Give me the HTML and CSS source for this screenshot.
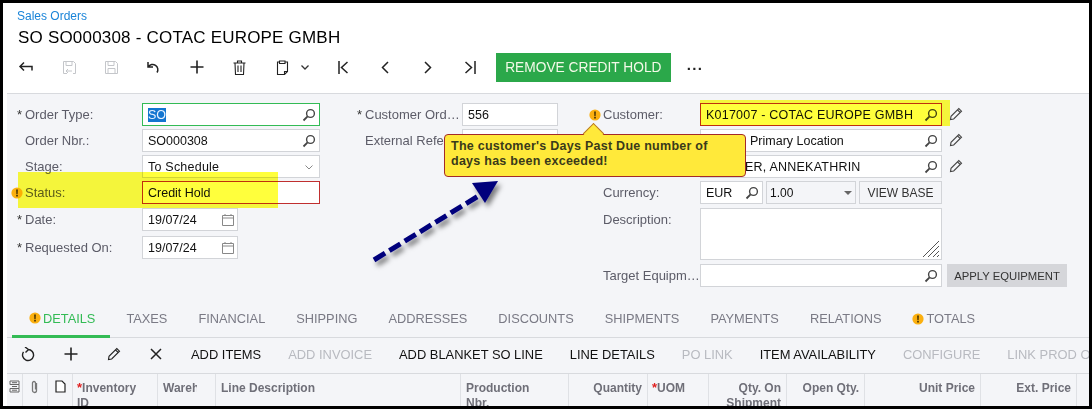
FILE: index.html
```html
<!DOCTYPE html>
<html lang="en">
<head>
    <meta charset="UTF-8">
    <meta name="viewport" content="width=device-width, initial-scale=1.0">
    <title>Sales Orders</title>
    <link rel="stylesheet" href="styles.css">
</head>
<body>
    <svg class="defs" width="0" height="0">
        <symbol id="i-search" viewBox="0 0 14 14"><circle cx="8.5" cy="5.5" r="3.9" fill="none" stroke="currentColor" stroke-width="1.4"/><path d="M5.6 8.4 1.5 12.5" stroke="currentColor" stroke-width="1.8" fill="none"/></symbol>
        <symbol id="i-cal" viewBox="0 0 14 14"><path d="M1.5 2.5h11v10h-11zM1.5 5h11M4 1v2M10 1v2" fill="none" stroke="currentColor"/></symbol>
        <symbol id="i-edit" viewBox="0 0 14 14"><path d="M1.5 12.5 2 9.3 9.8 1.5l2.7 2.7L4.7 12zM8.5 2.8l2.7 2.7" fill="none" stroke="currentColor" stroke-width="1.1"/></symbol>
        <symbol id="i-warn" viewBox="0 0 12 12"><circle cx="6" cy="6" r="5.6" fill="#fbb010"/><path d="M5.2 2.6h1.6l-.2 4.3H5.4zM5.2 7.8h1.6v1.6H5.2z" fill="#3a2a00"/></symbol>
        <symbol id="i-plus" viewBox="0 0 14 14"><path d="M7 .5v13M.5 7h13" stroke="currentColor" stroke-width="1.6" fill="none"/></symbol>
    </svg>

    <div class="frame">
        <header class="page-head">
            <a class="crumb">Sales Orders</a>
            <h1>SO SO000308 - COTAC EUROPE GMBH</h1>
            <div class="toolbar">
                <span class="tool"><svg width="16" height="14" viewBox="0 0 16 14"><path d="M6 2.5 2 6.5l4 4M2 6.5h12v4" fill="none" stroke="currentColor" stroke-width="1.5"/></svg></span>
                <span class="tool off"><svg width="15" height="15" viewBox="0 0 15 15"><path d="M5 13.500H1.500v-12h10l2 2v10H11M4 1.500v4h6v-4M4 11l2-2M4 11l2 2M4 11h6" fill="none" stroke="currentColor"/></svg></span>
                <span class="tool off"><svg width="15" height="15" viewBox="0 0 15 15"><path d="M1.500 1.500h10l2 2v10h-12zM4 1.500v4h6v-4M4 13.500v-5h7v5" fill="none" stroke="currentColor"/></svg></span>
                <span class="tool"><svg width="16" height="14" viewBox="0 0 16 14"><path d="M2 2v5h5M2.300 6.800A5.200 5.200 0 1 1 11 12.500" fill="none" stroke="currentColor" stroke-width="1.500"/></svg></span>
                <span class="tool"><svg width="14" height="14"><use href="#i-plus"/></svg></span>
                <span class="tool"><svg width="13" height="15" viewBox="0 0 13 15"><path d="M.5 3h12M4.500 3V1h4v2M2 3l.5 11.500h8L11 3M5 5.500v6.500M8 5.500v6.500" fill="none" stroke="currentColor" stroke-width="1.100"/></svg></span>
                <span class="tool paste"><svg width="13" height="15" viewBox="0 0 13 15"><path d="M3.500 2h-2v12.500h7l3-3V2h-2M3.500 1h5.500v2.500H3.500zM8.500 14.500v-3h3" fill="none" stroke="currentColor" stroke-width="1.100"/></svg><svg class="caret" width="8" height="5" viewBox="0 0 8 5"><path d="M.5.500 4 4 7.500.500" fill="none" stroke="currentColor" stroke-width="1.300"/></svg></span>
                <span class="tool"><svg width="10" height="13" viewBox="0 0 10 13"><path d="M1 0v13M9.500 1 3.500 6.500l6 5.500" fill="none" stroke="currentColor" stroke-width="1.500"/></svg></span>
                <span class="tool"><svg width="8" height="13" viewBox="0 0 8 13"><path d="M7 1 1.500 6.500 7 12" fill="none" stroke="currentColor" stroke-width="1.500"/></svg></span>
                <span class="tool"><svg width="8" height="13" viewBox="0 0 8 13"><path d="M1 1l5.500 5.500L1 12" fill="none" stroke="currentColor" stroke-width="1.500"/></svg></span>
                <span class="tool"><svg width="11" height="13" viewBox="0 0 11 13"><path d="M10 0v13M.5 1l6 5.500-6 5.500" fill="none" stroke="currentColor" stroke-width="1.500"/></svg></span>
                <button class="btn-hold">REMOVE CREDIT HOLD</button>
                <span class="more">&middot;&middot;&middot;</span>
            </div>
        </header>

        <section class="form">
            <div class="col">
                <div class="field"><span class="mark">*</span><label>Order Type:</label><div class="input focus w-lg"><span class="sel">SO</span><svg class="ico"><use href="#i-search"/></svg></div></div>
                <div class="field"><span class="mark"></span><label>Order Nbr.:</label><div class="input w-lg"><span>SO000308</span><svg class="ico"><use href="#i-search"/></svg></div></div>
                <div class="field"><span class="mark"></span><label>Stage:</label><div class="input w-lg"><span class="spaced">To Schedule</span><svg class="chev" width="8" height="5" viewBox="0 0 8 5"><path d="M.5.500 4 4 7.500.500" fill="none" stroke="currentColor"/></svg></div></div>
                <div class="field"><span class="mark"><svg class="warn"><use href="#i-warn"/></svg></span><label>Status:</label><div class="input error w-lg"><span>Credit Hold</span></div></div>
                <div class="field date"><span class="mark">*</span><label>Date:</label><div class="input w-sm"><span>19/07/24</span><svg class="ico cal"><use href="#i-cal"/></svg></div></div>
                <div class="field tall"><span class="mark">*</span><label>Requested On:</label><div class="input w-sm"><span>19/07/24</span><svg class="ico cal"><use href="#i-cal"/></svg></div></div>
            </div>
            <div class="col">
                <div class="field"><span class="mark">*</span><label>Customer Ord…</label><div class="input w-sm"><span>556</span></div></div>
                <div class="field"><span class="mark"></span><label>External Refe</label><div class="input w-sm"></div></div>
            </div>
            <div class="col">
                <div class="field"><span class="mark"><svg class="warn"><use href="#i-warn"/></svg></span><label>Customer:</label><div class="input error w-xl"><span class="spaced">K017007 - COTAC EUROPE GMBH</span><svg class="ico"><use href="#i-search"/></svg></div><svg class="edit"><use href="#i-edit"/></svg></div>
                <div class="field"><span class="mark"></span><label></label><div class="input w-xl under-tip"><span>Primary Location</span><svg class="ico"><use href="#i-search"/></svg></div><svg class="edit"><use href="#i-edit"/></svg></div>
                <div class="field"><span class="mark"></span><label></label><div class="input w-xl under-tip contact"><span class="spaced">ER, ANNEKATHRIN</span><svg class="ico"><use href="#i-search"/></svg></div><svg class="edit"><use href="#i-edit"/></svg></div>
                <div class="field"><span class="mark"></span><label>Currency:</label>
                    <div class="currency">
                        <div class="input w-cur"><span>EUR</span><svg class="ico"><use href="#i-search"/></svg></div>
                        <div class="input rate"><span>1.00</span><i class="tri"></i></div>
                        <button class="btn-base">VIEW BASE</button>
                    </div>
                </div>
                <div class="field area"><span class="mark"></span><label>Description:</label><div class="input textarea w-xl"><svg class="grip" width="18" height="18" viewBox="0 0 18 18"><path d="M1 17 17 1M6 17 17 6M11 17l6-6M15 17l2-2" stroke="#555" fill="none"/></svg></div></div>
                <div class="field"><span class="mark"></span><label>Target Equipm…</label><div class="input w-xl"><svg class="ico"><use href="#i-search"/></svg></div><button class="btn-apply">APPLY EQUIPMENT</button></div>
            </div>
        </section>

        <nav class="tabs">
            <span class="tab active"><svg class="warn"><use href="#i-warn"/></svg>DETAILS</span>
            <span class="tab">TAXES</span>
            <span class="tab">FINANCIAL</span>
            <span class="tab">SHIPPING</span>
            <span class="tab">ADDRESSES</span>
            <span class="tab">DISCOUNTS</span>
            <span class="tab">SHIPMENTS</span>
            <span class="tab">PAYMENTS</span>
            <span class="tab">RELATIONS</span>
            <span class="tab"><svg class="warn"><use href="#i-warn"/></svg>TOTALS</span>
        </nav>

        <div class="grid-bar">
            <span class="g-tool"><svg width="14" height="15" viewBox="0 0 14 15"><path d="M7 2.500a5.500 5.500 0 1 1-4.500 2.400M4 0l3.500 2.500L4.500 5.500" fill="none" stroke="currentColor" stroke-width="1.400"/></svg></span>
            <span class="g-tool"><svg width="14" height="14"><use href="#i-plus"/></svg></span>
            <span class="g-tool"><svg width="14" height="14"><use href="#i-edit"/></svg></span>
            <span class="g-tool"><svg width="12" height="12" viewBox="0 0 12 12"><path d="M1 1l10 10M11 1 1 11" stroke="currentColor" stroke-width="1.500" fill="none"/></svg></span>
            <span class="g-btn">ADD ITEMS</span>
            <span class="g-btn off">ADD INVOICE</span>
            <span class="g-btn">ADD BLANKET SO LINE</span>
            <span class="g-btn">LINE DETAILS</span>
            <span class="g-btn off">PO LINK</span>
            <span class="g-btn">ITEM AVAILABILITY</span>
            <span class="g-btn off">CONFIGURE</span>
            <span class="g-btn off">LINK PROD O</span>
        </div>

        <div class="table-head">
            <div class="th c-ico"><svg width="11" height="13" viewBox="0 0 11 13"><path d="M1 1h9v3.500H1zM1 8.500h9V12H1zM1 4.500h9v4M3 2.700h5M3 6.500h5M3 10.200h5" fill="none" stroke="#666"/></svg></div>
            <div class="th c-clip"><svg width="9" height="14" viewBox="0 0 9 14"><path d="M6.500 3v7.500a2 2 0 0 1-4 0V3a1.500 1.500 0 0 1 3 0v6.500" fill="none" stroke="#777" stroke-width="1.300"/></svg></div>
            <div class="th c-note"><svg width="11" height="13" viewBox="0 0 11 13"><path d="M1 1h6l3 3v8H1z" fill="#fff" stroke="#222" stroke-width="1.200"/></svg></div>
            <div class="th c-inv"><b>*</b>Inventory<br>ID</div>
            <div class="th c-ware"><span class="clip">Wareh</span></div>
            <div class="th c-desc">Line Description</div>
            <div class="th c-prod">Production<br>Nbr.</div>
            <div class="th c-qty right">Quantity</div>
            <div class="th c-uom"><b>*</b>UOM</div>
            <div class="th c-ship right">Qty. On<br>Shipment</div>
            <div class="th c-open right">Open Qty.</div>
            <div class="th c-price right">Unit Price</div>
            <div class="th c-ext right">Ext. Price</div>
        </div>

        <!-- annotations drawn over the screen -->
        <div class="mark-yellow status-hl"></div>
        <div class="mark-yellow customer-hl"></div>
        <div class="tip">The customer's Days Past Due number of days has been exceeded!</div>
        <svg class="arrow" width="150" height="100" viewBox="0 0 150 100">
            <defs>
                <filter id="sh" x="-20%" y="-20%" width="150%" height="150%"><feDropShadow dx="3" dy="4" stdDeviation="2.500" flood-color="#000" flood-opacity=".5"/></filter>
            </defs>
            <g filter="url(#sh)">
                <path d="M6 84 112 19" stroke="#00007c" stroke-width="5" stroke-dasharray="13 5" fill="none"/>
                <path d="M130 5 104 7 117 27z" fill="#00007c"/>
            </g>
        </svg>
    </div>
</body>
</html>
```

FILE: styles.css
```css
* {
    box-sizing: border-box;
}
html, body {
    margin: 0;
    height: 100%;
}
body {
    font-family: "Liberation Sans", Arial, sans-serif;
    color: #111;
    background: #000;
    overflow: hidden;
}
.defs {
    position: absolute;
}
.frame {
    position: relative;
    width: 1092px;
    height: 409px;
    border: 3px solid #000;
    background: #fff;
    overflow: hidden;
}

/* header */
.page-head {
    height: 90px;
    padding: 6px 0 0 14px;
}
.crumb {
    display: block;
    font-size: 12px;
    line-height: 14px;
    color: #1a84d8;
}
h1 {
    margin: 4px 0 0 1px;
    font-size: 17px;
    font-weight: 400;
    line-height: 22px;
    letter-spacing: .2px;
    color: #000;
}
.toolbar {
    display: flex;
    align-items: center;
    height: 30px;
    margin: 3px 0 0 -12px;
    color: #222;
}
.tool {
    display: flex;
    flex: none;
    align-items: center;
    justify-content: center;
    width: 42.7px;
}
.tool.off {
    color: #c4c6ca;
}
.tool.paste {
    justify-content: flex-start;
    gap: 12px;
    width: 60.3px;
    padding-left: 15px;
}
.caret {
    color: #333;
}
.btn-hold {
    height: 29px;
    width: 175px;
    margin-left: 3.7px;
    border: 0;
    padding: 0;
    background: #2ba84a;
    color: #f4f9e8;
    font: 13.75px "Liberation Sans", Arial, sans-serif;
}
.more {
    margin-left: 16px;
    padding-top: 4px;
    font-size: 15px;
    font-weight: 700;
    letter-spacing: .5px;
    line-height: 20px;
}

/* form */
.form {
    display: flex;
    gap: 31px;
    height: 208px;
    margin-left: 4px;
    padding: 9px 0 0 4px;
    background: #f4f5f8;
    border-top: 1px solid #d8dade;
}
.field {
    display: flex;
    align-items: flex-start;
    height: 23px;
    margin-bottom: 3px;
    font-size: 12.5px;
}
.field.date {
    margin-top: 4px;
}
.field.tall {
    margin-top: 5px;
}
.field.area {
    height: 52px;
    margin-top: 4px;
    margin-bottom: 4px;
}
.mark {
    width: 14px;
    height: 23px;
    padding: 5px 0 0 6px;
    font-size: 13px;
    line-height: 14px;
    color: #333;
}
.warn {
    display: block;
    width: 12px;
    height: 12px;
    margin: 1px 0 0 -6px;
}
label {
    width: 97px;
    font-size: 13px;
    line-height: 23px;
    color: #5c5c68;
    white-space: nowrap;
}
.col:first-child label {
    width: 117px;
}
.input {
    position: relative;
    display: flex;
    align-items: center;
    height: 23px;
    padding-left: 5px;
    border: 1px solid #d2d4d8;
    background: #fff;
    font-size: 12.5px;
    color: #111;
    white-space: nowrap;
}
.input.focus {
    border-color: #33bb55;
}
.input.error {
    border-color: #c02f2f;
}
.input.under-tip {
    padding-left: 49px;
}
.input.contact {
    padding-left: 44px;
}
.sel {
    background: #1275d0;
    color: #e8f2ff;
}
.spaced {
    letter-spacing: .22px;
}
.w-lg { width: 178px; }
.w-sm { width: 96px; }
.w-xl { width: 242px; }
.ico {
    position: absolute;
    right: 3px;
    top: 4px;
    width: 14px;
    height: 14px;
    color: #444;
}
.ico.cal {
    right: 2px;
    color: #888;
}
.chev {
    position: absolute;
    right: 6px;
    top: 9px;
    color: #888;
}
.edit {
    width: 14px;
    height: 14px;
    margin: 4px 0 0 7px;
    color: #444;
}
.currency {
    display: flex;
    gap: 3px;
}
.w-cur {
    width: 63px;
}
.rate {
    width: 90px;
    background: #f4f5f8;
    font-size: 12px;
    padding-left: 3px;
}
.tri {
    position: absolute;
    right: 3px;
    top: 9px;
    border: 4px solid transparent;
    border-top-color: #666;
    border-bottom: 0;
}
.btn-base {
    width: 83px;
    height: 23px;
    padding: 0;
    border: 1px solid #d2d4d8;
    background: #f4f5f8;
    font: 12px "Liberation Sans", Arial, sans-serif;
    color: #333;
}
.textarea {
    height: 52px;
}
.grip {
    position: absolute;
    right: 1px;
    bottom: 1px;
}
.btn-apply {
    width: 120px;
    height: 23px;
    margin-left: 5px;
    padding: 0;
    border: 0;
    background: #d5d6da;
    font: 11.3px "Liberation Sans", Arial, sans-serif;
    color: #333;
}

/* tabs */
.tabs {
    display: flex;
    gap: 31px;
    height: 37px;
    margin-left: 4px;
    padding-left: 5px;
    background: #f4f5f8;
    border-bottom: 1px solid #d8dade;
}
.tab {
    display: flex;
    align-items: center;
    height: 37px;
    padding-bottom: 2px;
    font-size: 12.8px;
    color: #7a7a85;
    white-space: nowrap;
}
.tab .warn {
    margin: 0 2px 0 0;
}
.tab.active {
    color: #33bb55;
    padding: 0 15px 0 17px;
    margin-right: -15px;
    border-bottom: 3px solid #33bb55;
}

/* grid toolbar */
.grid-bar {
    display: flex;
    align-items: center;
    height: 36px;
    margin-left: 4px;
    padding: 0 0 3px 14px;
    background: #f4f5f8;
    border-bottom: 1px solid #d8dade;
    white-space: nowrap;
    overflow: hidden;
}
.g-tool {
    display: flex;
    justify-content: center;
    width: 14px;
    margin-right: 29px;
    color: #222;
}
.g-tool:nth-child(4) {
    margin-right: 29px;
}
.g-btn {
    margin-right: 27px;
    font-size: 12.9px;
    color: #111;
}
.g-btn.off {
    color: #b8bac0;
}

/* table head */
.table-head {
    display: flex;
    height: 36px;
    margin-left: 4px;
    background: #f4f5f8;
    overflow: hidden;
}
.th {
    flex: none;
    height: 36px;
    padding: 7px 5px 0;
    border-right: 1px solid #dfe1e5;
    font-size: 12px;
    font-weight: 700;
    line-height: 14.5px;
    color: #6f6f78;
}
.th b {
    color: #e02020;
    font-size: 13px;
}
.th.right {
    text-align: right;
}
.clip {
    display: block;
    overflow: hidden;
    white-space: nowrap;
    width: 34px;
}
.c-ico { width: 16px; padding: 6px 0 0 2px; }
.c-clip { width: 25px; padding: 6px 0 0 7px; }
.c-note { width: 25px; padding: 6px 0 0 7px; }
.c-inv { width: 85px; padding-left: 4px; }
.c-ware { width: 58px; }
.c-desc { width: 245px; }
.c-prod { width: 108px; }
.c-qty { width: 79px; }
.c-uom { width: 61px; padding-left: 4px; }
.c-ship { width: 78px; }
.c-open { width: 78px; }
.c-price { width: 116px; }
.c-ext { width: 96px; }

/* annotations */
.mark-yellow {
    position: absolute;
    background: #ffff3c;
    mix-blend-mode: multiply;
}
.status-hl {
    left: 15px;
    top: 169px;
    width: 260px;
    height: 36px;
}
.customer-hl {
    left: 697px;
    top: 97px;
    width: 250px;
    height: 26px;
}
.tip {
    position: absolute;
    left: 441px;
    top: 131px;
    width: 302px;
    height: 43px;
    padding: 4px 30px 4px 6px;
    background: #ffe93a;
    border: 1px solid #a32a2a;
    border-radius: 4px;
    font-size: 12.5px;
    font-weight: 700;
    line-height: 15px;
    letter-spacing: .26px;
    color: #3a3a1a;
}
.tip::before {
    content: "";
    position: absolute;
    left: 141px;
    top: -9px;
    width: 14px;
    height: 14px;
    background: #ffe93a;
    border-left: 1px solid #b5722a;
    border-top: 1px solid #b5722a;
    transform: rotate(45deg);
}
.arrow {
    position: absolute;
    left: 365px;
    top: 173px;
}
```
